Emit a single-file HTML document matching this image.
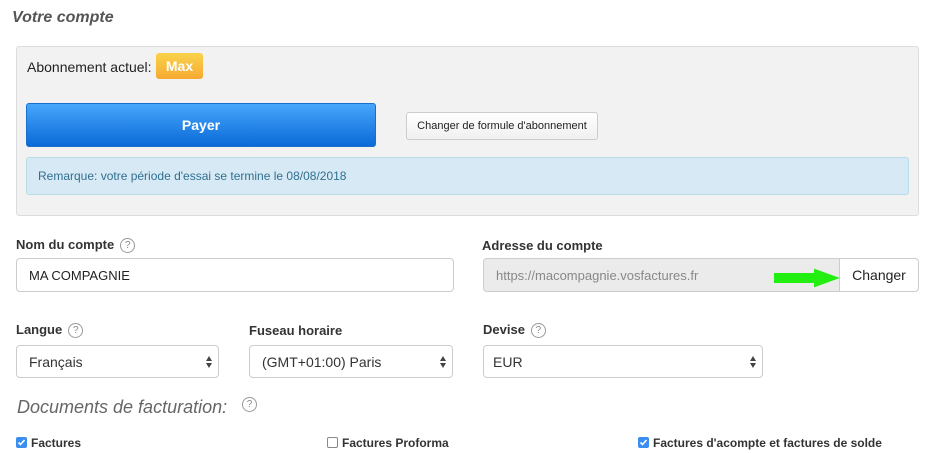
<!DOCTYPE html>
<html><head><meta charset="utf-8"><style>
*{box-sizing:border-box;margin:0;padding:0}
body{width:929px;height:453px;overflow:hidden;background:#fff;font-family:"Liberation Sans",Arial,sans-serif;color:#333;position:relative}
.a{position:absolute}
.h1{left:12px;top:9px;font-size:16px;font-weight:bold;font-style:italic;color:#555}
.panel{left:16px;top:46px;width:903px;height:170px;background:#f2f2f2;border:1px solid #ddd;border-radius:3px}
.lbl{font-size:13px;font-weight:bold;color:#333}
.q{display:inline-block;width:15px;height:15px;border:1px solid #999;border-radius:50%;font-size:10px;line-height:13px;text-align:center;color:#888;font-weight:normal;vertical-align:middle;margin-left:6px}
.inp{border:1px solid #ccc;border-radius:4px;background:#fff;font-size:13px;padding-left:12px;display:flex;align-items:center}
.sel{font-size:14px}
.arr{position:absolute;right:5px;top:9px;width:8px;height:14px}
.cb{display:inline-block;width:11px;height:11px;border-radius:2px;vertical-align:-1px;margin-right:4px}
.cb.on{background:#3b8ef0;position:relative}
.cb.off{border:1px solid #888;background:#fff}
</style></head><body>
<div class="a h1">Votre compte</div>
<div class="a panel"></div>
<div class="a" style="left:27px;top:59px;font-size:14px;color:#222">Abonnement actuel:</div>
<div class="a" style="left:156px;top:53px;width:47px;height:26px;border-radius:3px;background:linear-gradient(#f8d34a,#f7a932);color:#fff;font-weight:bold;font-size:14px;text-align:center;line-height:26px">Max</div>
<div class="a" style="left:26px;top:103px;width:350px;height:44px;border-radius:3px;background:linear-gradient(#47a6fb,#0a6ad8);border:1px solid #1b6fcc;color:#fff;font-weight:bold;font-size:14px;text-align:center;line-height:42px">Payer</div>
<div class="a" style="left:406px;top:112px;width:192px;height:28px;border-radius:3px;border:1px solid #ccc;background:linear-gradient(#fff,#f0f0f0);font-size:11px;text-align:center;line-height:26px;color:#222">Changer de formule d'abonnement</div>
<div class="a" style="left:26px;top:157px;width:883px;height:38px;border-radius:3px;border:1px solid #b6dce9;background:#d6e9f5;color:#31708f;font-size:12px;padding-left:11px;line-height:36px">Remarque: votre période d'essai se termine le 08/08/2018</div>

<div class="a lbl" style="left:16px;top:237px">Nom du compte<span class="q">?</span></div>
<div class="a inp" style="left:16px;top:258px;width:438px;height:34px;color:#222">MA COMPAGNIE</div>
<div class="a lbl" style="left:482px;top:238px">Adresse du compte</div>
<div class="a inp" style="left:483px;top:258px;width:357px;height:34px;background:#ebebeb;color:#888;border-radius:4px 0 0 4px;font-size:13px">https://macompagnie.vosfactures.fr</div>
<div class="a" style="left:839px;top:258px;width:80px;height:34px;border:1px solid #ccc;border-radius:0 4px 4px 0;background:#fff;font-size:14px;text-align:center;line-height:32px;color:#222">Changer</div>
<svg class="a" style="left:772px;top:267px" width="68" height="22"><path d="M3 7 H43 V3 L65 11 L43 19 V15 H3 Z" fill="#22ee11" stroke="#22ee11" stroke-width="2"/></svg>

<div class="a lbl" style="left:16px;top:322px">Langue<span class="q">?</span></div>
<div class="a lbl" style="left:249px;top:323px">Fuseau horaire</div>
<div class="a lbl" style="left:483px;top:322px">Devise<span class="q">?</span></div>
<div class="a inp sel" style="left:16px;top:345px;width:203px;height:33px">Français<svg class="arr" viewBox="0 0 8 14"><path d="M4 1 L7 6 H1Z M4 13 L7 8 H1Z" fill="#444"/></svg></div>
<div class="a inp sel" style="left:249px;top:345px;width:204px;height:33px">(GMT+01:00) Paris<svg class="arr" viewBox="0 0 8 14"><path d="M4 1 L7 6 H1Z M4 13 L7 8 H1Z" fill="#444"/></svg></div>
<div class="a inp sel" style="left:483px;top:345px;width:280px;height:33px;padding-left:9px">EUR<svg class="arr" viewBox="0 0 8 14"><path d="M4 1 L7 6 H1Z M4 13 L7 8 H1Z" fill="#444"/></svg></div>

<div class="a" style="left:17px;top:397px;font-size:18px;font-style:italic;color:#666">Documents de facturation:</div>
<span class="a q" style="left:236px;top:397px">?</span>

<div class="a lbl" style="left:16px;top:436px;font-size:12px"><span class="cb on"><svg width="11" height="11" style="position:absolute;left:0;top:0"><path d="M2.5 5.5 L4.5 7.5 L8.5 3" stroke="#fff" stroke-width="1.6" fill="none"/></svg></span>Factures</div>
<div class="a lbl" style="left:327px;top:436px;font-size:12px"><span class="cb off"></span>Factures Proforma</div>
<div class="a lbl" style="left:638px;top:436px;font-size:12px"><span class="cb on"><svg width="11" height="11" style="position:absolute;left:0;top:0"><path d="M2.5 5.5 L4.5 7.5 L8.5 3" stroke="#fff" stroke-width="1.6" fill="none"/></svg></span>Factures d'acompte et factures de solde</div>
</body></html>
